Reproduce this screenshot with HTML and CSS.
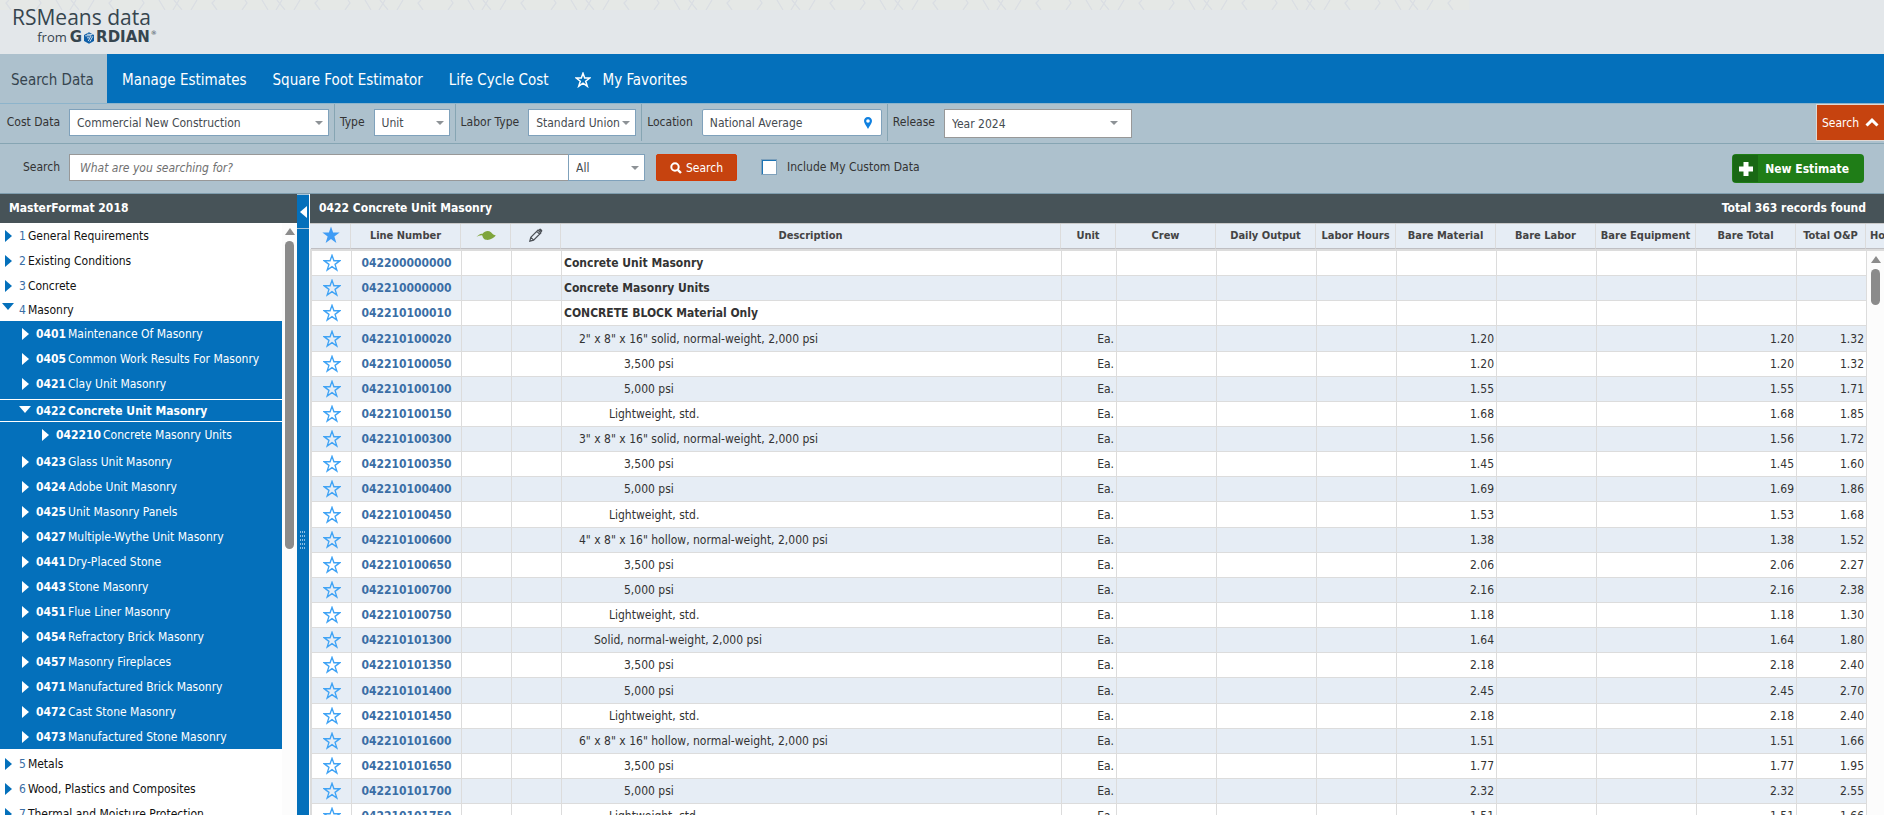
FILE: index.html
```html
<!DOCTYPE html>
<html lang="en">
	<head>
		<meta charset="utf-8">
		<title>RSMeans data - Search Data</title>
		<link rel="stylesheet" href="styles.css">
	</head>
	<body>
		<svg class="defs" aria-hidden="true">
			<symbol id="star" viewBox="0 0 16 16">
				<path d="M8 1.2 9.7 6H14.9L10.7 9.2 12.3 14.3 8 11.2 3.7 14.3 5.3 9.2 1.1 6H6.3Z" />
			</symbol>
		</svg>

		<header class="brand">
			<svg class="brand-pattern" aria-hidden="true">
				<pattern id="hex" width="103" height="10" patternUnits="userSpaceOnUse">
					<path d="M9 0 6 3 11 10M39 0 41 3 36 10M56 0 62 10M70 10 76 0M71 0 79 10M88 10 94 0" fill="none" stroke="#dadee3" stroke-width="1.3" />
				</pattern>
				<rect width="100%" height="10" fill="#e5e8e6" />
				<rect width="100%" height="10" fill="url(#hex)" />
			</svg>
			<a href="#" class="logo">
				<span class="logo-name">RSMeans data</span>
				<span class="logo-owner">
					<span class="logo-from">from</span>
					<b>G</b>
					<svg width="12" height="12" viewBox="0 0 12 12">
						<path d="M6 0.3 11 3.1V8.9L6 11.7 1 8.9V3.1Z" fill="#0f5fa8" />
						<path d="M2.2 3.8H8.2L5.2 9M9.8 4.3 6.9 9.6M4 5.8H6.5M3.9 2.2 9.5 2.6" fill="none" stroke="#dfe8ef" stroke-width="0.9" />
					</svg>
					<b>RDIAN</b>
					<sup>®</sup>
				</span>
			</a>
		</header>

		<nav class="main-nav">
			<a href="#" class="active">Search Data</a>
			<a href="#">Manage Estimates</a>
			<a href="#">Square Foot Estimator</a>
			<a href="#">Life Cycle Cost</a>
			<a href="#" class="favorites">
				<svg width="16" height="16" class="star-white"><use href="#star" /></svg>
				My Favorites
			</a>
		</nav>

		<form class="filters" onsubmit="return false">
			<div class="filter-row">
				<div class="group">
					<label for="cost-data" class="first">Cost Data</label>
					<span class="drop cost"><select id="cost-data"><option>Commercial New Construction</option></select></span>
				</div>
				<div class="group">
					<label for="type">Type</label>
					<span class="drop type"><select id="type"><option>Unit</option></select></span>
				</div>
				<div class="group">
					<label for="labor">Labor Type</label>
					<span class="drop labor"><select id="labor"><option>Standard Union</option></select></span>
				</div>
				<div class="group">
					<label for="location">Location</label>
					<span class="location">
						<input id="location" type="text" value="National Average">
						<svg width="10" height="14" viewBox="0 0 10 14">
							<path fill-rule="evenodd" d="M5 1C2.5 1 1 2.8 1 5 1 7.5 3.5 9.5 5 13 6.5 9.5 9 7.5 9 5 9 2.8 7.5 1 5 1ZM5 3.2A1.8 1.8 0 1 1 5 6.8 1.8 1.8 0 1 1 5 3.2Z" fill="#0f80e0" />
						</svg>
					</span>
				</div>
				<div class="group">
					<label for="release">Release</label>
					<span class="drop release"><select id="release"><option>Year 2024</option></select></span>
				</div>
				<button type="button" class="toggle-search">
					Search
					<svg width="14" height="9" viewBox="0 0 14 9"><path d="M1.5 7.5 7 2.2 12.5 7.5" fill="none" stroke="#fff" stroke-width="3" /></svg>
				</button>
			</div>
			<div class="search-row">
				<label for="term" class="first">Search</label>
				<input id="term" type="text" placeholder="What are you searching for?">
				<span class="drop scope"><select aria-label="Scope"><option>All</option></select></span>
				<button type="submit" class="search-btn">
					<svg width="12" height="12" viewBox="0 0 12 12"><circle cx="5" cy="5" r="3.7" fill="none" stroke="#fff" stroke-width="2" /><path d="M7.8 7.8 11 11" stroke="#fff" stroke-width="2.4" /></svg>
					Search
				</button>
				<input id="custom" type="checkbox">
				<label for="custom">Include My Custom Data</label>
				<button type="button" class="new-estimate">
					<span class="plus"><svg width="14" height="14" viewBox="0 0 14 14"><path d="M7 0V14M0 7H14" stroke="#fff" stroke-width="5" /></svg></span>
					New Estimate
				</button>
			</div>
		</form>

		<main class="workspace">
			<aside class="sidebar">
				<h2>MasterFormat 2018</h2>
				<div class="tree-wrap">
					<ul class="tree">
						<li><a href="#"><i>1</i> General Requirements</a></li>
						<li><a href="#"><i>2</i> Existing Conditions</a></li>
						<li><a href="#"><i>3</i> Concrete</a></li>
						<li class="open">
							<a href="#"><i>4</i> Masonry</a>
							<ul>
								<li><a href="#"><b>0401</b> Maintenance Of Masonry</a></li>
								<li><a href="#"><b>0405</b> Common Work Results For Masonry</a></li>
								<li><a href="#"><b>0421</b> Clay Unit Masonry</a></li>
								<li class="open selected">
									<a href="#"><b>0422</b> Concrete Unit Masonry</a>
									<ul>
										<li><a href="#"><b>042210</b> Concrete Masonry Units</a></li>
									</ul>
								</li>
								<li><a href="#"><b>0423</b> Glass Unit Masonry</a></li>
								<li><a href="#"><b>0424</b> Adobe Unit Masonry</a></li>
								<li><a href="#"><b>0425</b> Unit Masonry Panels</a></li>
								<li><a href="#"><b>0427</b> Multiple-Wythe Unit Masonry</a></li>
								<li><a href="#"><b>0441</b> Dry-Placed Stone</a></li>
								<li><a href="#"><b>0443</b> Stone Masonry</a></li>
								<li><a href="#"><b>0451</b> Flue Liner Masonry</a></li>
								<li><a href="#"><b>0454</b> Refractory Brick Masonry</a></li>
								<li><a href="#"><b>0457</b> Masonry Fireplaces</a></li>
								<li><a href="#"><b>0471</b> Manufactured Brick Masonry</a></li>
								<li><a href="#"><b>0472</b> Cast Stone Masonry</a></li>
								<li><a href="#"><b>0473</b> Manufactured Stone Masonry</a></li>
							</ul>
						</li>
						<li><a href="#"><i>5</i> Metals</a></li>
						<li><a href="#"><i>6</i> Wood, Plastics and Composites</a></li>
						<li><a href="#"><i>7</i> Thermal and Moisture Protection</a></li>
					</ul>
					<div class="scrollbar"><span class="up"></span><span class="thumb tree-thumb"></span></div>
				</div>
			</aside>

			<div class="splitter">
				<button type="button" class="collapse" aria-label="Collapse"></button>
				<span class="grip"></span>
			</div>

			<section class="results">
				<div class="results-title">
					<h2>0422 Concrete Unit Masonry</h2>
					<span>Total 363 records found</span>
				</div>
				<div class="grid-head">
					<table>
						<colgroup>
							<col class="w40"><col class="w110"><col class="w50"><col class="w50"><col><col class="w55">
							<col class="w100"><col class="w100"><col class="w80"><col class="w100"><col class="w100"><col class="w100"><col class="w100"><col class="w70"><col class="w18">
						</colgroup>
						<tr>
							<th><svg width="20" height="20" class="star-solid"><use href="#star" /></svg></th>
							<th>Line Number</th>
							<th>
								<svg width="20" height="11" viewBox="0 0 20 11"><path d="M0.5 7C2.500 4.500 4.600 3.200 6.600 3.800 8.700 0.800 12.500 0.300 15 2.200 16.600 4 18 5 19.800 5.400 17.500 8 14 10.400 10.200 9.800 8.200 9.400 6.800 8 6.300 5.400 4.400 5 2.500 5.800 0.500 7Z" fill="#7fa53c" /></svg>
							</th>
							<th>
								<svg width="14" height="14" viewBox="0 0 14 14"><path d="M0.8 13.2 1.8 9.4 9 2.2 11.8 5 4.6 12.2ZM1.8 9.4 4.6 12.2M7.8 3.4 10.6 6.2" fill="none" stroke="#4a4f55" stroke-width="1.2" /><path d="M9.4 1.8 10.4 0.9Q11.2 0.3 12 1L13 2Q13.7 2.8 13.1 3.6L12.2 4.6Z" fill="#4a4f55" /></svg>
							</th>
							<th>Description</th>
							<th>Unit</th>
							<th>Crew</th>
							<th>Daily Output</th>
							<th>Labor Hours</th>
							<th>Bare Material</th>
							<th>Bare Labor</th>
							<th>Bare Equipment</th>
							<th>Bare Total</th>
							<th>Total O&amp;P</th>
							<th class="cut">Ho</th>
						</tr>
					</table>
				</div>
				<div class="grid-body">
					<table>
						<colgroup>
							<col class="w40"><col class="w110"><col class="w50"><col class="w50"><col><col class="w55">
							<col class="w100"><col class="w100"><col class="w80"><col class="w100"><col class="w100"><col class="w100"><col class="w100"><col class="w70">
						</colgroup>
						<tbody id="rows"></tbody>
					</table>
					<div class="scrollbar"><span class="up"></span><span class="thumb"></span></div>
				</div>
			</section>
		</main>

		<script>
			// line number, indent level, description, material, total O&P
			const lines = [
				['042200000000', 0, 'Concrete Unit Masonry'],
				['042210000000', 0, 'Concrete Masonry Units'],
				['042210100010', 0, 'CONCRETE BLOCK Material Only'],
				['042210100020', 1, '2" x 8" x 16" solid, normal-weight, 2,000 psi', '1.20', '1.32'],
				['042210100050', 4, '3,500 psi', '1.20', '1.32'],
				['042210100100', 4, '5,000 psi', '1.55', '1.71'],
				['042210100150', 3, 'Lightweight, std.', '1.68', '1.85'],
				['042210100300', 1, '3" x 8" x 16" solid, normal-weight, 2,000 psi', '1.56', '1.72'],
				['042210100350', 4, '3,500 psi', '1.45', '1.60'],
				['042210100400', 4, '5,000 psi', '1.69', '1.86'],
				['042210100450', 3, 'Lightweight, std.', '1.53', '1.68'],
				['042210100600', 1, '4" x 8" x 16" hollow, normal-weight, 2,000 psi', '1.38', '1.52'],
				['042210100650', 4, '3,500 psi', '2.06', '2.27'],
				['042210100700', 4, '5,000 psi', '2.16', '2.38'],
				['042210100750', 3, 'Lightweight, std.', '1.18', '1.30'],
				['042210101300', 2, 'Solid, normal-weight, 2,000 psi', '1.64', '1.80'],
				['042210101350', 4, '3,500 psi', '2.18', '2.40'],
				['042210101400', 4, '5,000 psi', '2.45', '2.70'],
				['042210101450', 3, 'Lightweight, std.', '2.18', '2.40'],
				['042210101600', 1, '6" x 8" x 16" hollow, normal-weight, 2,000 psi', '1.51', '1.66'],
				['042210101650', 4, '3,500 psi', '1.77', '1.95'],
				['042210101700', 4, '5,000 psi', '2.32', '2.55'],
				['042210101750', 3, 'Lightweight, std.', '1.51', '1.66'],
			];

			document.getElementById('rows').innerHTML = lines
				.map(([number, level, text, material = '', total = '']) => `<tr>
					<td class="fav"><svg width="18" height="18" class="star-line"><use href="#star" /></svg></td>
					<td class="number"><a href="#">${number}</a></td>
					<td></td><td></td>
					<td class="level-${level}">${text}</td>
					<td class="num">${material && 'Ea.'}</td>
					<td></td><td></td><td></td>
					<td class="num">${material}</td>
					<td></td><td></td>
					<td class="num">${material}</td>
					<td class="num">${total}</td>
				</tr>`)
				.join('');
		</script>
	</body>
</html>
```
FILE: styles.css
```css
*,
*::before,
*::after {
	box-sizing: border-box;
}
body {
	display: flex;
	flex-direction: column;
	height: 100vh;
	margin: 0;
	overflow: hidden;
	background: #fff;
	color: #333;
	font: 12px "DejaVu Sans Condensed", "DejaVu Sans", sans-serif;
}
a {
	color: inherit;
	text-decoration: none;
}
h2 {
	margin: 0;
	font-size: 12px;
}
ul {
	margin: 0;
	padding: 0;
	list-style: none;
}
svg {
	display: block;
	flex: none;
}
button,
input,
select {
	font: inherit;
	color: inherit;
}
button {
	border: 0;
	cursor: pointer;
}
.defs {
	position: absolute;
	width: 0;
	height: 0;
}

/* header */
.brand {
	position: relative;
	flex: none;
	height: 54px;
	background: #e3e7ea;
}
.brand-pattern {
	position: absolute;
	top: 0;
	left: 0;
	width: 78%;
	height: 10px;
}
.logo {
	position: relative;
	display: inline-flex;
	flex-direction: column;
	align-items: flex-end;
	padding: 5px 0 0 12px;
	color: #36454f;
}
.logo-name {
	padding-right: 6px;
	font: 21px/25px "Open Sans", sans-serif;
}
.logo-owner {
	display: flex;
	align-items: center;
	gap: 1px;
	height: 15px;
	font: 15px/15px "DejaVu Sans", sans-serif;
}
.logo-from {
	padding-right: 2px;
	font: 13px/15px "Open Sans", sans-serif;
}
.logo sup {
	font-size: 6px;
	line-height: 6px;
	align-self: flex-start;
}

.main-nav {
	display: flex;
	flex: none;
	height: 49px;
	background: #0470bb;
	color: #fff;
	font-size: 15px;
}
.main-nav a {
	display: flex;
	align-items: center;
	padding: 3px 13px 0;
}
.main-nav .active {
	width: 107px;
	margin-right: 2px;
	padding: 3px 0 0 11px;
	background: #adc1cd;
	color: #36454f;
}
.main-nav .favorites {
	gap: 12px;
}
.star-white {
	fill: none;
	stroke: #fff;
	stroke-width: 1.5;
}

/* filters */
.filters {
	flex: none;
	background: #adc1cd;
	border-top: 1px solid #8db4cb;
	border-bottom: 1px solid #7f9dae;
}
.filter-row {
	display: flex;
	align-items: flex-start;
	height: 39px;
}
.group {
	display: flex;
	gap: 9px;
	height: 37px;
	padding: 5px 5px 0;
	border-right: 1px solid #86a5b3;
}
.group:nth-of-type(5) {
	border-right: 0;
}
.filters label {
	line-height: 26px;
	white-space: nowrap;
}
.group:first-child {
	padding-left: 0;
}
.filters .first {
	width: 60px;
	text-align: right;
}
.drop {
	position: relative;
	display: block;
}
.drop::after {
	content: "";
	position: absolute;
	top: 12px;
	right: 6px;
	border: 4px solid transparent;
	border-top: 4px solid #8d9296;
	border-bottom: 0;
	pointer-events: none;
}
select,
.filters input[type="text"] {
	display: block;
	width: 100%;
	height: 27px;
	margin: 0;
	padding: 0 7px;
	border: 1px solid #7fa1bb;
	border-radius: 0;
	background: #fff;
	appearance: none;
	color: #454b50;
	outline: 0;
}
.cost {
	width: 260px;
}
.type {
	width: 76px;
}
.labor {
	width: 108px;
}
.release {
	width: 188px;
}
.release::after {
	right: 14px;
}
.release select {
	height: 29px;
	border-color: #989898;
}
.location {
	position: relative;
	width: 180px;
}
.filters .location input {
	border-radius: 2px;
}
.location svg {
	position: absolute;
	top: 7px;
	right: 9px;
}
.toggle-search {
	display: flex;
	align-items: center;
	gap: 6px;
	height: 37px;
	margin-left: auto;
	padding: 0 5px;
	border: 1px solid #dfd8d4;
	border-right: 0;
	background: #c6430f;
	color: #fff;
}
.search-row {
	display: flex;
	height: 50px;
	padding-top: 10px;
	border-top: 1px solid #86a5b3;
}
.search-row #term {
	width: 499px;
	margin-left: 9px;
	padding-left: 10px;
	border-color: #989898;
	border-right: 0;
}
#term::placeholder {
	color: #707070;
	font-style: italic;
	opacity: 1;
}
.scope {
	width: 77px;
}
.search-btn {
	display: flex;
	align-items: center;
	gap: 4px;
	height: 27px;
	margin-left: 11px;
	padding: 0 13px;
	border: 1px solid #d23b06;
	border-radius: 2px;
	background: #c6430f;
	color: #fff;
}
.search-row input[type="checkbox"] {
	appearance: none;
	width: 16px;
	height: 16px;
	margin: 5px 10px 0 24px;
	border: 1px solid #7fa1bb;
	background: #fff;
	box-shadow: inset 1px 1px #1b74b5;
}
.new-estimate {
	display: flex;
	align-items: center;
	height: 29px;
	margin: 0 20px 0 auto;
	padding: 0 15px 0 1px;
	border-radius: 4px;
	background: #1f7d17;
	color: #fff;
	font-weight: bold;
}
.plus {
	display: flex;
	align-items: center;
	justify-content: center;
	width: 25px;
	height: 27px;
	margin-right: 7px;
	background: #196814;
}

/* workspace */
.workspace {
	display: flex;
	flex: 1;
	min-height: 0;
}
.sidebar {
	display: flex;
	flex-direction: column;
	flex: none;
	width: 297px;
}
.sidebar h2,
.results-title {
	flex: none;
	height: 29px;
	padding: 0 18px 0 9px;
	background: #475358;
	color: #fff;
	line-height: 29px;
}
.tree-wrap {
	display: flex;
	flex: 1;
	min-height: 0;
}
.tree {
	flex: 1;
	overflow: hidden;
	color: #111;
}
.tree a {
	display: flex;
	align-items: center;
	gap: 2px;
	height: 25px;
	padding-left: 5px;
	white-space: nowrap;
}
.tree i {
	color: #3a6ea5;
	font-style: normal;
}
.tree a::before {
	content: "";
	margin-right: 5px;
	border: 6px solid transparent;
	border-left: 7px solid #0470bb;
	border-right: 0;
}
.tree .open > a::before {
	margin: 0 3px 6px -3px;
	border: 6px solid transparent;
	border-top: 7px solid #0470bb;
	border-bottom: 0;
}
.tree > .open > a {
	height: 23px;
}
.tree ul {
	background: #0470bb;
	color: #fff;
}
.tree > .open > ul {
	margin-bottom: 2px;
}
.tree ul a {
	padding-left: 22px;
}
.tree ul a::before {
	border-left-color: #fff;
}
.tree ul .open > a::before {
	margin-bottom: 2px;
	border-color: #fff transparent transparent;
}
.tree .selected {
	padding: 3px 0 2px;
}
.tree .selected > a {
	height: 23px;
	border: solid #fff;
	border-width: 1px 0;
	font-weight: bold;
}
.tree ul ul a {
	padding-left: 42px;
}

.scrollbar {
	display: flex;
	flex-direction: column;
	align-items: center;
	flex: none;
	width: 15px;
	padding-top: 5px;
	background: #fcfcfc;
}
.up {
	border: 5px solid transparent;
	border-top: 0;
	border-bottom: 7px solid #8b8b8b;
}
.thumb {
	width: 9px;
	height: 36px;
	margin-top: 6px;
	border-radius: 5px;
	background: #8b8b8b;
}
.tree-thumb {
	height: 308px;
}

.splitter {
	display: flex;
	flex-direction: column;
	align-items: center;
	flex: none;
	width: 13px;
	border-right: 1px solid #fff;
	background: #0470bb;
}
.collapse {
	display: flex;
	align-items: center;
	justify-content: center;
	width: 100%;
	height: 35px;
	padding: 0;
	border: solid #a9c6da;
	border-width: 1px 0;
	background: #0470bb;
}
.collapse::before {
	content: "";
	border: 6px solid transparent;
	border-right: 7px solid #fff;
	border-left: 0;
}
.grip {
	width: 6px;
	height: 22px;
	margin-top: 300px;
	background: repeating-linear-gradient(#0470bb 0 2px, transparent 2px 4px), repeating-linear-gradient(90deg, #8dbfe4 0 1px, #0470bb 1px 2px);
}

/* results */
.results {
	display: flex;
	flex-direction: column;
	flex: 1;
	min-width: 0;
}
.results-title {
	display: flex;
	justify-content: space-between;
	font-weight: bold;
}
table {
	flex: 1;
	width: 100%;
	table-layout: fixed;
	border-collapse: separate;
	border-spacing: 0;
}
.w18 {
	width: 18px;
}
.w40 {
	width: 40px;
}
.w50 {
	width: 50px;
}
.w55 {
	width: 55px;
}
.w70 {
	width: 70px;
}
.w80 {
	width: 80px;
}
.w100 {
	width: 100px;
}
.w110 {
	width: 110px;
}
th,
td {
	overflow: hidden;
	white-space: nowrap;
	border-right: 1px solid #dcdcdc;
}
.grid-head {
	flex: none;
	padding-left: 1px;
	border-top: 1px solid #c9c9c9;
	border-bottom: 2px solid #dcdcdc;
	background: #e6edf5;
}
th {
	height: 25px;
	padding: 0 0 2px;
	border-bottom: 1px solid #bfbfc3;
	color: #444;
	font-size: 11px;
}
th svg,
.fav svg {
	margin: 0 auto;
}
th.cut {
	padding-left: 4px;
	border-right: 0;
	text-align: left;
}
.grid-body {
	display: flex;
	flex: 1;
	align-items: flex-start;
	min-height: 0;
	overflow: hidden;
	border-left: 2px solid #dcdcdc;
}
.grid-body .scrollbar {
	align-self: stretch;
	width: 17px;
}
td {
	height: 25px;
	padding: 0 2px;
	border-bottom: 1px solid #dcdcdc;
}
tr:nth-child(7n + 4) td {
	height: 26px;
}
tr:nth-child(even) td {
	background: #e6edf5;
}
.number {
	color: #3a6ea5;
	font-weight: bold;
	text-align: center;
}
.num {
	text-align: right;
}
.level-0 {
	font-weight: bold;
}
.level-1 {
	padding-left: 17px;
}
.level-2 {
	padding-left: 32px;
}
.level-3 {
	padding-left: 47px;
}
.level-4 {
	padding-left: 62px;
}
.star-solid {
	fill: #3f9cf5;
}
.star-line {
	fill: none;
	stroke: #3fa3f5;
	stroke-width: 1.2;
}
```
